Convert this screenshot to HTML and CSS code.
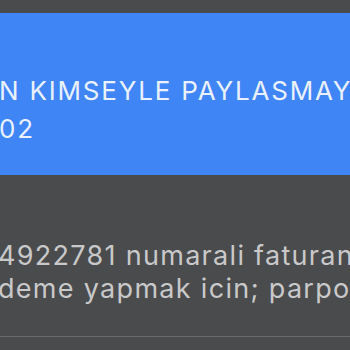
FILE: index.html
```html
<!DOCTYPE html>
<html lang="tr">
<head>
<meta charset="utf-8">
<link rel="stylesheet" href="styles.css">
</head>
<body>
<div class="page">
  <div class="banner">
    <p class="banner-text"><span class="line">N KIMSEYLE PAYLASMAY</span><span class="line">02</span></p>
  </div>
  <div class="message">
    <p class="message-text"><span class="line">4922781 numarali faturan</span><span class="line">deme yapmak icin; parpo</span></p>
  </div>
  <div class="footer"></div>
</div>
</body>
</html>
```
FILE: styles.css
```css
html, body {
  margin: 0;
  padding: 0;
  background: #4a4b4d;
  overflow: hidden;
}
.page {
  width: 350px;
  height: 350px;
  overflow: hidden;
  display: flex;
  flex-direction: column;
  font-family: Inter, "Liberation Sans", Arial, sans-serif;
}
.banner {
  margin-top: 13px;
  height: 162px;
  box-sizing: border-box;
  background: #3f85f5;
  padding-top: 59px;
}
.banner-text {
  margin: 0 0 0 -1px;
  color: #eaf1fd;
  font-size: 26px;
  line-height: 38px;
  letter-spacing: 1.8px;
  white-space: nowrap;
}
.line {
  display: block;
}
.message {
  padding-top: 64px;
  height: 161px;
  box-sizing: border-box;
}
.message-text {
  margin: 0 0 0 -2px;
  color: #c9c9ca;
  font-size: 27px;
  line-height: 33px;
  letter-spacing: 1.3px;
  white-space: nowrap;
}
.footer {
  border-top: 1px solid #6b6c6e;
  flex: 1;
}
```
